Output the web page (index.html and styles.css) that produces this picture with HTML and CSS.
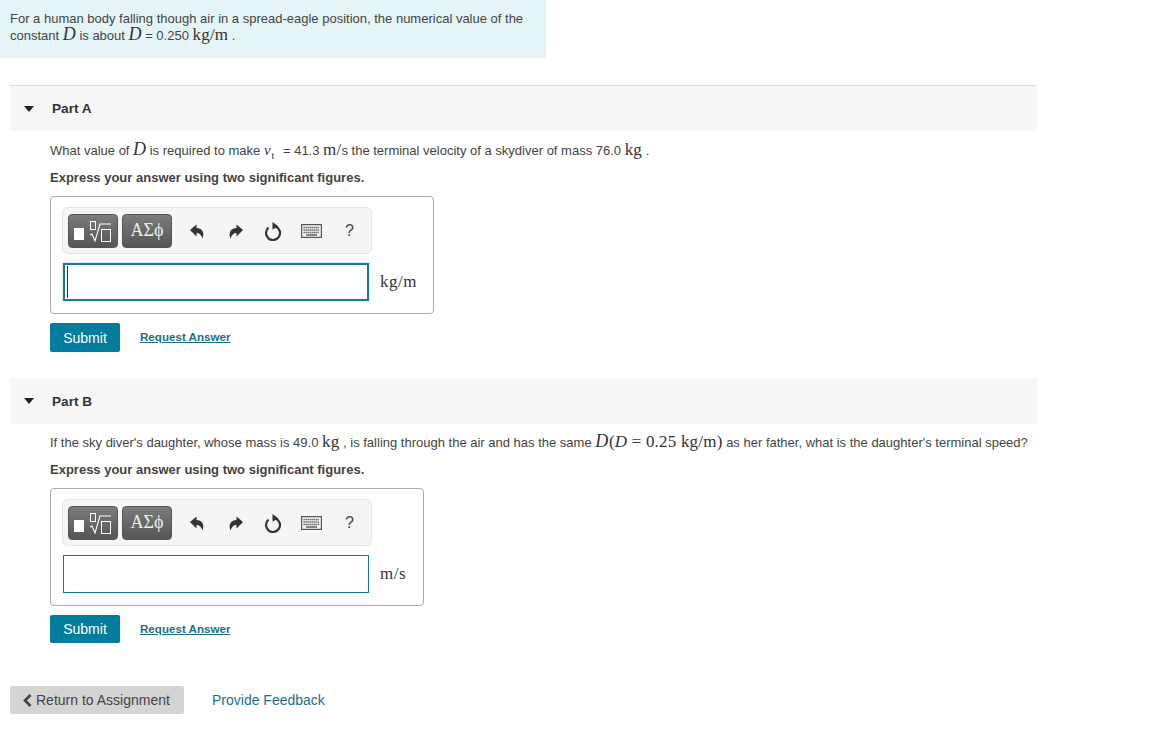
FILE: index.html
```html
<!DOCTYPE html>
<html lang="en">
<head>
    <meta charset="UTF-8">
    <title>Part A and Part B</title>
    <link rel="stylesheet" href="styles.css">
</head>
<body>

    <svg class="icon-defs" width="0" height="0">
        <symbol id="undo" viewBox="0 0 16 16"><path d="M1 7 7.500 1.500V5C12.500 5 16 9 13.500 15.500 12.500 12 10.500 10 7.500 10v3.500z"/></symbol>
        <symbol id="redo" viewBox="0 0 16 16"><path d="M15 7 8.500 1.500V5C3.500 5 0 9 2.500 15.500 3.500 12 5.500 10 8.500 10v3.500z"/></symbol>
        <symbol id="reset" viewBox="0 0 20 20"><path d="M12.500 5.460A7 7 0 1 1 5.500 6.600" fill="none" stroke="currentColor" stroke-width="2.200"/><path d="M9.500 1 15.500 5.500 9.500 8.500z"/></symbol>
        <symbol id="keyboard" viewBox="0 0 21 14"><rect x=".6" y=".6" width="19.800" height="12.800" fill="#f4f4f4" stroke="currentColor" stroke-width="1.200"/><path d="M2.500 3.500h16M2.500 6h16M2.500 8.500h16" fill="none" stroke="currentColor" stroke-width="1.400" stroke-dasharray="1.300 .7"/><path d="M5 11h11" fill="none" stroke="currentColor" stroke-width="1.400"/></symbol>
    </svg>

    <div class="intro">
        <div>For a human body falling though air in a spread-eagle position, the numerical value of the</div>
        <div>constant <i class="math var">D</i> is about <i class="math var">D</i> = 0.250 <span class="math unit">kg/m</span> .</div>
    </div>

    <div class="part part-a">
        <div class="part-head">
            <span class="caret"></span>
            <h2>Part A</h2>
        </div>
        <div class="part-body">
            <p class="question">What value of <i class="math var">D</i> is required to make <i class="math vel">v<sub>t</sub></i> = 41.3 <span class="math unit">m/</span>s the terminal velocity of a skydiver of mass 76.0 <span class="math unit">kg</span> .</p>
            <p class="hint">Express your answer using two significant figures.</p>
            <div class="answer-box box-wide">
                <div class="toolbar">
                    <button class="tpl-btn" type="button">
                        <span class="tpl-block"></span>
                        <svg class="tpl-root" width="26" height="24" viewBox="0 0 26 24"><path d="M3 16l2-1 3 7L13 5h11" fill="none" stroke="#fff" stroke-width="1.100"/><rect x="3.500" y="2.500" width="5" height="8" fill="none" stroke="#fff"/><rect x="14.500" y="10.500" width="9" height="12" fill="none" stroke="#fff"/></svg>
                    </button>
                    <button class="tpl-btn greek" type="button">ΑΣϕ</button>
                    <svg class="tool undo"><use href="#undo"/></svg>
                    <svg class="tool redo"><use href="#redo"/></svg>
                    <svg class="tool reset"><use href="#reset"/></svg>
                    <svg class="tool keyboard"><use href="#keyboard"/></svg>
                    <span class="tool-help">?</span>
                </div>
                <div class="input-row">
                    <div class="answer-input focused"><span class="cursor"></span></div>
                    <span class="math answer-unit">kg/m</span>
                </div>
            </div>
            <div class="actions">
                <button class="submit" type="button">Submit</button>
                <a class="request" href="#">Request Answer</a>
            </div>
        </div>
    </div>

    <div class="part part-b">
        <div class="part-head">
            <span class="caret"></span>
            <h2>Part B</h2>
        </div>
        <div class="part-body">
            <p class="question">If the sky diver's daughter, whose mass is 49.0 <span class="math unit">kg</span> , is falling through the air and has the same <i class="math var">D</i> <span class="math unit paren">(<i>D</i> = 0.25 kg/m)</span> as her father, what is the daughter's terminal speed?</p>
            <p class="hint">Express your answer using two significant figures.</p>
            <div class="answer-box box-narrow">
                <div class="toolbar">
                    <button class="tpl-btn" type="button">
                        <span class="tpl-block"></span>
                        <svg class="tpl-root" width="26" height="24" viewBox="0 0 26 24"><path d="M3 16l2-1 3 7L13 5h11" fill="none" stroke="#fff" stroke-width="1.100"/><rect x="3.500" y="2.500" width="5" height="8" fill="none" stroke="#fff"/><rect x="14.500" y="10.500" width="9" height="12" fill="none" stroke="#fff"/></svg>
                    </button>
                    <button class="tpl-btn greek" type="button">ΑΣϕ</button>
                    <svg class="tool undo"><use href="#undo"/></svg>
                    <svg class="tool redo"><use href="#redo"/></svg>
                    <svg class="tool reset"><use href="#reset"/></svg>
                    <svg class="tool keyboard"><use href="#keyboard"/></svg>
                    <span class="tool-help">?</span>
                </div>
                <div class="input-row">
                    <div class="answer-input"></div>
                    <span class="math answer-unit">m/s</span>
                </div>
            </div>
            <div class="actions">
                <button class="submit" type="button">Submit</button>
                <a class="request" href="#">Request Answer</a>
            </div>
        </div>
    </div>

    <div class="footer">
        <a class="return-btn" href="#">
            <svg width="9" height="13" viewBox="0 0 9 13"><path d="M7.500 1 2 6.500 7.500 12" fill="none" stroke="#444" stroke-width="2.600"/></svg>
            Return to Assignment
        </a>
        <a class="feedback" href="#">Provide Feedback</a>
    </div>

</body>
</html>
```

FILE: styles.css
```css
body {
    margin: 0;
    background-color: #fff;
    color: #444;
    font-family: "Liberation Sans", Arial, sans-serif;
    font-size: 14px;
}

.icon-defs {
    display: block;
    position: absolute;
}

.math {
    font-family: "Liberation Serif", "Times New Roman", serif;
    color: #333;
}

.var {
    font-size: 18px;
    line-height: 14px;
}

.vel {
    margin-right: 4px;
    font-size: 15px;
    letter-spacing: 1px;
}

.vel sub {
    font-size: 10px;
    font-style: normal;
    line-height: 0;
}

.unit {
    font-size: 17px;
    line-height: 14px;
    letter-spacing: 0.2px;
}

.paren {
    margin-left: -3px;
}

.intro {
    width: 536px;
    height: 48px;
    padding: 10px 0 0 10px;
    font-size: 13px;
    line-height: 17px;
    white-space: nowrap;
    background-color: #e5f4f7;
}

.part {
    width: 1027px;
    margin-left: 10px;
}

.part-a {
    margin-top: 27px;
}

.part-b {
    margin-top: 26px;
}

.part-head {
    display: flex;
    align-items: center;
    height: 46px;
    background-color: #f7f7f7;
}

.part-a .part-head {
    height: 45px;
    border-top: 1px solid #ddd;
}

.caret {
    width: 0;
    height: 0;
    margin-left: 14px;
    border-top: 6px solid #222;
    border-left: 5.500px solid transparent;
    border-right: 5.500px solid transparent;
}

h2 {
    margin: 0 0 0 17px;
    padding-left: 1px;
    font-size: 13.600px;
    color: #333;
}

.part-body {
    padding-left: 40px;
}

.question {
    margin: 0;
    padding-top: 10px;
    height: 26px;
    font-size: 13px;
    line-height: 18px;
    white-space: nowrap;
}

.part-a .question {
    height: 27px;
}

.hint {
    margin: 0;
    padding-top: 1px;
    height: 27px;
    font-size: 13px;
    line-height: 18px;
    font-weight: bold;
}

.answer-box {
    box-sizing: border-box;
    height: 118px;
    padding: 10px 11px;
    border: 1px solid #aaa;
    border-radius: 4px;
}

.box-wide {
    width: 384px;
}

.box-narrow {
    width: 374px;
}

.toolbar {
    display: flex;
    align-items: center;
    box-sizing: border-box;
    width: 310px;
    height: 47px;
    padding-left: 5px;
    background-color: #f5f5f5;
    border: 1px solid #e6e6e6;
    border-radius: 6px;
}

.tpl-btn {
    display: flex;
    align-items: center;
    justify-content: center;
    width: 50px;
    height: 34px;
    margin-right: 4px;
    padding: 0;
    color: #eee;
    background: linear-gradient(#7c7c7c, #555);
    border: 1px solid #555;
    border-radius: 4px;
}

.greek {
    font-family: "Liberation Serif", serif;
    font-size: 18px;
}

.tpl-block {
    width: 10px;
    height: 12px;
    margin: 6px 3px 0 0;
    background-color: #fff;
}

.tool {
    flex: none;
    fill: #333;
    color: #333;
}

.undo {
    width: 16px;
    height: 16px;
    margin-left: 13px;
}

.redo {
    width: 16px;
    height: 16px;
    margin-left: 23px;
}

.reset {
    width: 20px;
    height: 20px;
    margin-left: 19px;
}

.keyboard {
    width: 21px;
    height: 14px;
    margin-left: 18px;
    color: #555;
}

.tool-help {
    margin-left: 23px;
    font-size: 16px;
    color: #444;
}

.input-row {
    display: flex;
    align-items: center;
    margin-top: 9px;
}

.answer-input {
    box-sizing: border-box;
    display: flex;
    align-items: center;
    width: 306px;
    height: 38px;
    margin-left: 1px;
    padding-left: 2px;
    background-color: #fff;
    border: 1px solid #0e7c95;
}

.answer-input.focused {
    border-width: 2px;
    border-color: #1b7a93;
    box-shadow: 0 0 2px #8fd0e0;
}

.cursor {
    width: 1px;
    height: 32px;
    background-color: #333;
}

.answer-unit {
    margin-left: 11px;
    font-size: 17px;
    letter-spacing: 0.5px;
}

.actions {
    display: flex;
    align-items: center;
    margin-top: 9px;
}

.submit {
    width: 70px;
    height: 29px;
    padding: 0;
    color: #fff;
    font-family: inherit;
    font-size: 14px;
    background-color: #007c9e;
    border: none;
    border-radius: 2px;
}

.part-b .submit {
    height: 28px;
}

.request {
    margin: 0 0 2px 20px;
    font-size: 11.600px;
    font-weight: bold;
    color: #1c6f87;
}

.footer {
    display: flex;
    align-items: center;
    margin: 43px 0 0 10px;
}

.return-btn {
    display: flex;
    align-items: center;
    gap: 4px;
    box-sizing: border-box;
    width: 174px;
    height: 28px;
    padding-left: 13px;
    color: #444;
    text-decoration: none;
    background-color: #d4d4d4;
    border-radius: 2px;
}

.feedback {
    margin-left: 28px;
    color: #1c6f87;
    text-decoration: none;
}
```
